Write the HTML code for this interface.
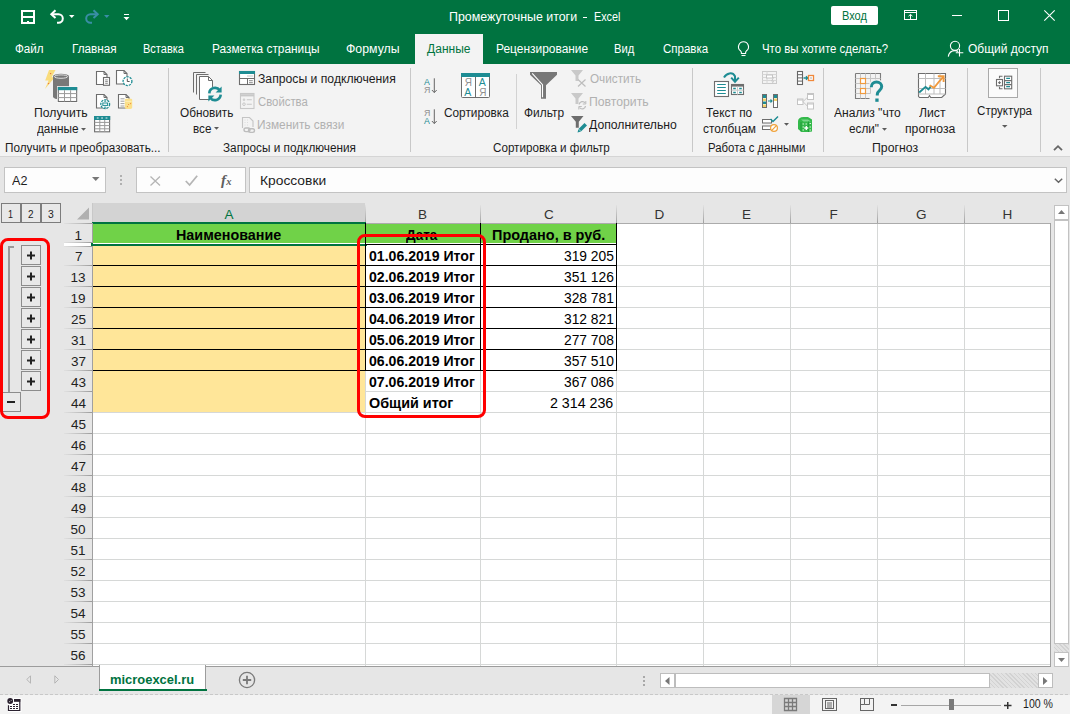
<!DOCTYPE html>
<html><head><meta charset="utf-8">
<style>
*{margin:0;padding:0;box-sizing:border-box}
html,body{width:1070px;height:714px;overflow:hidden;background:#f3f3f3;font-family:"Liberation Sans",sans-serif;position:relative}
.a{position:absolute}
.t{position:absolute;white-space:nowrap;line-height:1}
svg.a{overflow:visible}
</style></head><body>

<div class="a" style="left:0px;top:0px;width:1070px;height:64px;background:#007340"></div>
<svg class="a" style="left:21px;top:10px;" width="14" height="14" viewBox="0 0 14 14"><path d="M1 1h12v12H1z" fill="none" stroke="#fff" stroke-width="2"/><path d="M1 7h12" stroke="#fff" stroke-width="2"/><path d="M6 11h2v2h-2z" fill="#fff"/></svg>
<svg class="a" style="left:49px;top:9px;" width="16" height="15" viewBox="0 0 16 15"><path d="M3 5.2h6.5a4.3 4.3 0 0 1 0 8.6H8" fill="none" stroke="#fff" stroke-width="2"/><path d="M6.5 1.3L2.3 5.2 6.5 9.1" fill="none" stroke="#fff" stroke-width="2"/></svg>
<svg class="a" style="left:69px;top:15px;" width="6" height="3" viewBox="0 0 6 3"><path d="M0 0h5.5l-2.75 3z" fill="#fff"/></svg>
<svg class="a" style="left:84px;top:9px;" width="16" height="15" viewBox="0 0 16 15"><path d="M12 5.2H6.5a4.3 4.3 0 0 0 0 8.6H8" fill="none" stroke="#3a8ea6" stroke-width="2"/><path d="M9.5 1.3l4.2 3.9-4.2 3.9" fill="none" stroke="#3a8ea6" stroke-width="2"/></svg>
<svg class="a" style="left:104px;top:15px;" width="6" height="3" viewBox="0 0 6 3"><path d="M0 0h5.5l-2.75 3z" fill="#3a8ea6"/></svg>
<div class="a" style="left:124px;top:14px;width:5px;height:1px;background:#fff"></div>
<svg class="a" style="left:123px;top:17px;" width="7" height="4" viewBox="0 0 7 4"><path d="M0.5 0h6l-3 3.2z" fill="#fff"/></svg>
<div class="t" style="left:448.77px;top:11px;font-family:'Liberation Sans';font-size:12px;color:#fff;font-weight:normal;font-style:normal;transform:scaleX(1.0325);transform-origin:0 0;">Промежуточные итоги</div>
<div class="a" style="left:583px;top:17px;width:4px;height:1px;background:#fff"></div>
<div class="t" style="left:593.60px;top:11px;font-family:'Liberation Sans';font-size:12px;color:#fff;font-weight:normal;font-style:normal;transform:scaleX(0.9000);transform-origin:0 0;">Excel</div>
<div class="a" style="left:831px;top:6px;width:47px;height:19px;background:#fff;border-radius:2px"></div>
<div class="t" style="left:841.88px;top:10px;font-family:'Liberation Sans';font-size:12px;color:#007340;font-weight:normal;font-style:normal;transform:scaleX(0.9192);transform-origin:0 0;">Вход</div>
<svg class="a" style="left:904px;top:10px;" width="13" height="10" viewBox="0 0 13 10"><rect x="0.5" y="0.5" width="12" height="9" fill="none" stroke="#fff"/><path d="M0.5 2.5h12M6.5 9.5V4.5M4.5 6.2l2-1.8 2 1.8" fill="none" stroke="#fff"/></svg>
<div class="a" style="left:952px;top:15px;width:10px;height:1px;background:#fff"></div>
<svg class="a" style="left:998px;top:10px;" width="11" height="11" viewBox="0 0 11 11"><rect x="0.5" y="0.5" width="10" height="10" fill="none" stroke="#fff"/></svg>
<svg class="a" style="left:1044px;top:10px;" width="11" height="11" viewBox="0 0 11 11"><path d="M0.3 0.3l10.4 10.4M10.7 0.3L0.3 10.7" stroke="#fff" stroke-width="1.1"/></svg>
<div class="a" style="left:415px;top:34px;width:68px;height:30px;background:#f3f3f3"></div>
<div class="t" style="left:14.60px;top:43px;font-family:'Liberation Sans';font-size:12px;color:#fff;font-weight:normal;font-style:normal;transform:scaleX(0.9690);transform-origin:0 0;">Файл</div>
<div class="t" style="left:71.72px;top:43px;font-family:'Liberation Sans';font-size:12px;color:#fff;font-weight:normal;font-style:normal;transform:scaleX(0.9773);transform-origin:0 0;">Главная</div>
<div class="t" style="left:143.08px;top:43px;font-family:'Liberation Sans';font-size:12px;color:#fff;font-weight:normal;font-style:normal;transform:scaleX(0.9182);transform-origin:0 0;">Вставка</div>
<div class="t" style="left:211.71px;top:43px;font-family:'Liberation Sans';font-size:12px;color:#fff;font-weight:normal;font-style:normal;transform:scaleX(0.9869);transform-origin:0 0;">Разметка страницы</div>
<div class="t" style="left:346.30px;top:43px;font-family:'Liberation Sans';font-size:12px;color:#fff;font-weight:normal;font-style:normal;transform:scaleX(1.0250);transform-origin:0 0;">Формулы</div>
<div class="t" style="left:427.10px;top:43px;font-family:'Liberation Sans';font-size:12px;color:#007340;font-weight:normal;font-style:normal;transform:scaleX(1.0000);transform-origin:0 0;">Данные</div>
<div class="t" style="left:495.51px;top:43px;font-family:'Liberation Sans';font-size:12px;color:#fff;font-weight:normal;font-style:normal;transform:scaleX(0.9946);transform-origin:0 0;">Рецензирование</div>
<div class="t" style="left:614.47px;top:43px;font-family:'Liberation Sans';font-size:12px;color:#fff;font-weight:normal;font-style:normal;transform:scaleX(0.9333);transform-origin:0 0;">Вид</div>
<div class="t" style="left:662.50px;top:43px;font-family:'Liberation Sans';font-size:12px;color:#fff;font-weight:normal;font-style:normal;transform:scaleX(0.9596);transform-origin:0 0;">Справка</div>
<div class="t" style="left:762.45px;top:43px;font-family:'Liberation Sans';font-size:12px;color:#fff;font-weight:normal;font-style:normal;transform:scaleX(0.9515);transform-origin:0 0;">Что вы хотите сделать?</div>
<div class="t" style="left:967.50px;top:43px;font-family:'Liberation Sans';font-size:12px;color:#fff;font-weight:normal;font-style:normal;transform:scaleX(0.9988);transform-origin:0 0;">Общий доступ</div>
<svg class="a" style="left:737px;top:41px;" width="13" height="16" viewBox="0 0 13 16"><path d="M6.5 0.8a5 5 0 0 0-3 9c.6.5.9 1.1.9 1.9v.8h4.2v-.8c0-.8.3-1.4.9-1.9a5 5 0 0 0-3-9z" fill="none" stroke="#fff" stroke-width="1.1"/><path d="M4.5 14.5h4" stroke="#fff" stroke-width="1.1"/></svg>
<svg class="a" style="left:947px;top:40px;" width="18" height="18" viewBox="0 0 18 18"><circle cx="8" cy="5.8" r="4.6" fill="none" stroke="#fff" stroke-width="1.1"/><path d="M1.3 16.6c.6-3.6 3.3-6 6.7-6 1.2 0 2.3.3 3.2.8" fill="none" stroke="#fff" stroke-width="1.1"/><path d="M12.5 9v7.5M8.8 12.8h7.5" stroke="#fff" stroke-width="1.1"/></svg>
<div class="a" style="left:0px;top:64px;width:1070px;height:92px;background:#f3f3f3"></div>
<div class="a" style="left:0px;top:156px;width:1070px;height:1px;background:#d5d5d5"></div>
<div class="a" style="left:168px;top:68px;width:1px;height:84px;background:#c8c8c8"></div>
<div class="a" style="left:410px;top:68px;width:1px;height:84px;background:#c8c8c8"></div>
<div class="a" style="left:692px;top:68px;width:1px;height:84px;background:#c8c8c8"></div>
<div class="a" style="left:823px;top:68px;width:1px;height:84px;background:#c8c8c8"></div>
<div class="a" style="left:967px;top:68px;width:1px;height:84px;background:#c8c8c8"></div>
<div class="a" style="left:1040px;top:68px;width:1px;height:84px;background:#c8c8c8"></div>
<div class="a" style="left:516px;top:74px;width:1px;height:55px;background:#d2d2d2"></div>
<div class="t" style="left:5.42px;top:142px;font-family:'Liberation Sans';font-size:12px;color:#1c1c1c;font-weight:normal;font-style:normal;transform:scaleX(0.9771);transform-origin:0 0;">Получить и преобразовать...</div>
<div class="t" style="left:223.10px;top:142px;font-family:'Liberation Sans';font-size:12px;color:#1c1c1c;font-weight:normal;font-style:normal;transform:scaleX(0.9807);transform-origin:0 0;">Запросы и подключения</div>
<div class="t" style="left:492.70px;top:142px;font-family:'Liberation Sans';font-size:12px;color:#1c1c1c;font-weight:normal;font-style:normal;transform:scaleX(0.9700);transform-origin:0 0;">Сортировка и фильтр</div>
<div class="t" style="left:708.45px;top:142px;font-family:'Liberation Sans';font-size:12px;color:#1c1c1c;font-weight:normal;font-style:normal;transform:scaleX(0.9485);transform-origin:0 0;">Работа с данными</div>
<div class="t" style="left:871.58px;top:142px;font-family:'Liberation Sans';font-size:12px;color:#1c1c1c;font-weight:normal;font-style:normal;transform:scaleX(1.0227);transform-origin:0 0;">Прогноз</div>
<svg class="a" style="left:44px;top:69px;" width="36" height="34" viewBox="0 0 36 34">
<path d="M5 1h6.5L7.6 8.2h3.2L1 20l3.6-8.6H1.2z" fill="#f9dc7c"/>
<circle cx="6.6" cy="4.6" r="0.7" fill="#e8663c"/><circle cx="4.6" cy="14.6" r="0.7" fill="#e8663c"/>
<path d="M9 7.3a8 2.6 0 0 1 16 0v20.5a8 2.6 0 0 1-16 0z" fill="#787878"/>
<ellipse cx="17" cy="7.6" rx="6.6" ry="1.7" fill="none" stroke="#e8e8e8" stroke-width="0.9"/>
<rect x="13" y="17.2" width="21" height="16.6" fill="#fff"/>
<rect x="14.3" y="18.5" width="18.4" height="14" fill="#fff" stroke="#6d6d6d" stroke-width="1.1"/>
<rect x="13.8" y="18" width="19.4" height="3.2" fill="#1e8c93"/>
<path d="M14.3 24.6h18.4M14.3 28.6h18.4M20.5 21.2v11.3M26.6 21.2v11.3" stroke="#9a9a9a" stroke-width="1"/></svg>
<div class="t" style="left:33.88px;top:107px;font-family:'Liberation Sans';font-size:12px;color:#1c1c1c;font-weight:normal;font-style:normal;transform:scaleX(1.0173);transform-origin:0 0;">Получить</div>
<div class="t" style="left:37.20px;top:123px;font-family:'Liberation Sans';font-size:12px;color:#1c1c1c;font-weight:normal;font-style:normal;transform:scaleX(0.9810);transform-origin:0 0;">данные</div>
<svg class="a" style="left:81px;top:128px;" width="6" height="3" viewBox="0 0 6 3"><path d="M0 0h5l-2.5 2.8z" fill="#5a5a5a"/></svg>
<svg class="a" style="left:90px;top:66px;" width="50" height="70" viewBox="0 0 50 70">
<path d="M6.5 5.5H14l3 3v10H6.5z" fill="#fff" stroke="#6d6d6d" stroke-width="1.1"/><path d="M14 5.5v3h3" fill="none" stroke="#6d6d6d"/>
<rect x="13.5" y="11.5" width="6" height="7.8" fill="#fff" stroke="#6d6d6d" stroke-width="1.1"/><path d="M15.2 13.9h2.6M15.2 15.6h2.6M15.2 17.3h2.6" stroke="#8a8a8a"/>
<path d="M26.5 4.5H34l3 3v10.5H26.5z" fill="#fff" stroke="#6d6d6d" stroke-width="1.1"/><path d="M34 4.5v3h3" fill="none" stroke="#6d6d6d"/>
<circle cx="37.5" cy="15.2" r="4.4" fill="#fff" stroke="#1e8c93" stroke-width="1.3" stroke-dasharray="2.2 1"/><path d="M37.3 12.5v3h2.3" fill="none" stroke="#555" stroke-width="1"/>
<path d="M6.5 28.5H14l3 3v10.5H6.5z" fill="#fff" stroke="#6d6d6d" stroke-width="1.1"/><path d="M14 28.5v3h3" fill="none" stroke="#6d6d6d"/>
<circle cx="15.2" cy="38.2" r="4.4" fill="#fff" stroke="#1e8c93" stroke-width="1.3" stroke-dasharray="2.2 1"/><rect x="12.8" y="37" width="4.8" height="2.4" fill="#fff" stroke="#1e8c93" stroke-width="1"/><path d="M14.2 35.2h2M14.2 41.2h2" stroke="#1e8c93"/>
<path d="M28.5 28.5H36l3 3v10.5H28.5z" fill="#fff" stroke="#6d6d6d" stroke-width="1.1"/><path d="M36 28.5v3h3" fill="none" stroke="#6d6d6d"/>
<path d="M30.5 32.8h4M30.5 35.2h4M30.5 37.6h4M30.5 40h4" stroke="#a0a0a0"/>
<path d="M34.8 33.8a3.7 1.2 0 0 1 7.4 0v8a3.7 1.2 0 0 1-7.4 0z" fill="#fbe08a"/><path d="M35.3 35.3h6.4" stroke="#fff3c4" stroke-width="0.8"/>
<circle cx="38.6" cy="38.5" r="0.6" fill="#f0883a"/><circle cx="40.6" cy="37.6" r="0.6" fill="#f0883a"/><circle cx="37.4" cy="40.6" r="0.6" fill="#f0883a"/>
<rect x="4.6" y="50.6" width="15" height="15.2" fill="#fff" stroke="#6d6d6d" stroke-width="1.1"/><rect x="4" y="50" width="16.2" height="4" fill="#1e8c93"/>
<path d="M6.8 52h1.8M11.2 52h1.8M15.6 52h1.8" stroke="#fff" stroke-width="0.9"/>
<path d="M4.6 56.4h15M4.6 59.6h15M4.6 62.8h15M9.8 54v11.8M14.7 54v11.8" stroke="#9a9a9a"/></svg>
<svg class="a" style="left:192px;top:71px;" width="32" height="32" viewBox="0 0 32 32">
<path d="M1.5 1.5h12M1.5 1.5v20" fill="none" stroke="#6d6d6d"/>
<path d="M4.5 3.5h12M4.5 3.5v20" fill="none" stroke="#6d6d6d"/>
<path d="M7.5 5.5h9l4 4v19h-13z" fill="#fff" stroke="#6d6d6d"/>
<path d="M16.5 5.5v4h4" fill="none" stroke="#6d6d6d"/>
<circle cx="23" cy="23" r="7.5" fill="#f3f3f3"/>
<path d="M17.3 22.3a5.8 5.8 0 0 1 10.5-3" fill="none" stroke="#1e8c93" stroke-width="2.6"/>
<path d="M29.6 15.5v6h-6z" fill="#1e8c93"/>
<path d="M28.7 23.7a5.8 5.8 0 0 1-10.5 3" fill="none" stroke="#1e8c93" stroke-width="2.6"/>
<path d="M16.4 30.5v-6h6z" fill="#1e8c93"/></svg>
<div class="t" style="left:179.60px;top:107px;font-family:'Liberation Sans';font-size:12px;color:#1c1c1c;font-weight:normal;font-style:normal;transform:scaleX(0.9833);transform-origin:0 0;">Обновить</div>
<div class="t" style="left:192.53px;top:123px;font-family:'Liberation Sans';font-size:12px;color:#1c1c1c;font-weight:normal;font-style:normal;transform:scaleX(0.9722);transform-origin:0 0;">все</div>
<svg class="a" style="left:214px;top:127px;" width="6" height="3" viewBox="0 0 6 3"><path d="M0 0h5l-2.5 2.8z" fill="#5a5a5a"/></svg>
<svg class="a" style="left:239px;top:71px;" width="16" height="14" viewBox="0 0 16 14"><rect x="0.5" y="0.5" width="15" height="13" fill="#fff" stroke="#6d6d6d" stroke-width="1.1"/><rect x="0" y="0" width="16" height="3" fill="#1e8c93"/><path d="M8.5 5h1M10.5 5h1M12.5 5h1" stroke="#888"/><path d="M0.5 7.5h15M8.5 7.5v6" stroke="#6d6d6d"/><path d="M10 9.7h3.8M10 11.7h3.8" stroke="#8a8a8a"/></svg>
<div class="t" style="left:258.00px;top:73px;font-family:'Liberation Sans';font-size:12px;color:#1c1c1c;font-weight:normal;font-style:normal;transform:scaleX(1.0163);transform-origin:0 0;">Запросы и подключения</div>
<svg class="a" style="left:240px;top:93px;" width="15" height="16" viewBox="0 0 15 16"><rect x="0.5" y="0.5" width="13.5" height="15" fill="none" stroke="#c8c8c8" stroke-width="1.1"/><path d="M0.5 2.3h13.5" stroke="#c8c8c8" stroke-width="2.2"/><circle cx="4" cy="6.8" r="1.3" fill="#d0d0d0"/><circle cx="4" cy="11.2" r="1.3" fill="none" stroke="#c8c8c8"/><path d="M6.8 6.8h5M6.8 11.2h5" stroke="#c8c8c8" stroke-width="1.1"/></svg>
<div class="t" style="left:258.40px;top:96px;font-family:'Liberation Sans';font-size:12px;color:#b1b1b1;font-weight:normal;font-style:normal;transform:scaleX(0.9453);transform-origin:0 0;">Свойства</div>
<svg class="a" style="left:242px;top:117px;" width="14" height="16" viewBox="0 0 14 16"><path d="M0.5 11V0.5h7l3.5 3.5v6" fill="none" stroke="#c4c4c4" stroke-width="1.1"/><path d="M2.5 3h1M5 3h1M2.5 5.5h1M5 5.5h1M2.5 8h1M5 8h1" stroke="#dcdcdc"/><rect x="2" y="11" width="6" height="3.6" rx="1.8" fill="none" stroke="#bdbdbd" stroke-width="1.4"/><rect x="6.5" y="11.8" width="6" height="3.6" rx="1.8" fill="none" stroke="#bdbdbd" stroke-width="1.4"/></svg>
<div class="t" style="left:257.41px;top:119px;font-family:'Liberation Sans';font-size:12px;color:#b1b1b1;font-weight:normal;font-style:normal;transform:scaleX(0.9885);transform-origin:0 0;">Изменить связи</div>
<svg class="a" style="left:423px;top:78px;" width="15" height="16" viewBox="0 0 15 16"><text x="1" y="6.8" font-size="8.8" fill="#1e8c93" font-family="Liberation Sans">A</text>
<text x="1" y="14.8" font-size="8.8" fill="#8f8f8f" font-family="Liberation Sans">Я</text>
<path d="M11.3 0.3v14.2M8.9 12l2.4 2.6 2.4-2.6" fill="none" stroke="#666" stroke-width="1"/></svg>
<svg class="a" style="left:423px;top:109px;" width="15" height="16" viewBox="0 0 15 16"><text x="1" y="6.8" font-size="8.8" fill="#8f8f8f" font-family="Liberation Sans">Я</text>
<text x="1" y="14.8" font-size="8.8" fill="#1e8c93" font-family="Liberation Sans">A</text>
<path d="M11.3 0.3v14.2M8.9 12l2.4 2.6 2.4-2.6" fill="none" stroke="#666" stroke-width="1"/></svg>
<svg class="a" style="left:461px;top:73px;" width="30" height="25" viewBox="0 0 30 25"><rect x="0.5" y="0.5" width="28" height="24" rx="1" fill="#fff" stroke="#6d6d6d"/><rect x="0" y="0" width="29" height="4" fill="#1e8c93"/><path d="M14.5 4v20.5" stroke="#6d6d6d"/>
<text x="3.8" y="13.3" font-size="10" fill="#8f8f8f" font-family="Liberation Sans">Я</text><text x="3.3" y="23" font-size="10.5" fill="#1e8c93" font-family="Liberation Sans">A</text>
<text x="17.8" y="13.3" font-size="10.5" fill="#1e8c93" font-family="Liberation Sans">A</text><text x="18.3" y="23" font-size="10" fill="#8f8f8f" font-family="Liberation Sans">Я</text></svg>
<div class="t" style="left:443.50px;top:107px;font-family:'Liberation Sans';font-size:12px;color:#1c1c1c;font-weight:normal;font-style:normal;transform:scaleX(0.9833);transform-origin:0 0;">Сортировка</div>
<svg class="a" style="left:530px;top:72px;" width="27" height="27" viewBox="0 0 27 27"><path d="M0 0h27v2.8L16 13.2v13.6h-5V13.2L0 2.8z" fill="#777"/><path d="M2.2 1.4l10.3 11.3v12.6" fill="none" stroke="#fff" stroke-width="1.1"/></svg>
<div class="t" style="left:523.50px;top:107px;font-family:'Liberation Sans';font-size:12px;color:#1c1c1c;font-weight:normal;font-style:normal;transform:scaleX(0.9925);transform-origin:0 0;">Фильтр</div>
<svg class="a" style="left:571px;top:70px;" width="16" height="17" viewBox="0 0 16 17"><path d="M0 0h12l-4.5 5.5v5.5h-3v-5.5z" fill="#c9c9c9"/><path d="M7 9.5l7.5 7M14.5 9.5l-7.5 7" stroke="#bdbdbd" stroke-width="1.2"/></svg>
<div class="t" style="left:590.00px;top:73px;font-family:'Liberation Sans';font-size:12px;color:#b1b1b1;font-weight:normal;font-style:normal;transform:scaleX(0.9769);transform-origin:0 0;">Очистить</div>
<svg class="a" style="left:571px;top:93px;" width="16" height="17" viewBox="0 0 16 17"><path d="M0 0h12l-4.5 5.5v5.5h-3v-5.5z" fill="#c9c9c9"/><path d="M8.2 11.5a3.3 3.3 0 0 1 6-1.5M14.5 13a3.3 3.3 0 0 1-6 1.5" fill="none" stroke="#bdbdbd" stroke-width="1.3"/><path d="M14.8 8v3h-3M7.8 16.5v-3h3" fill="none" stroke="#bdbdbd"/></svg>
<div class="t" style="left:588.98px;top:96px;font-family:'Liberation Sans';font-size:12px;color:#b1b1b1;font-weight:normal;font-style:normal;transform:scaleX(1.0175);transform-origin:0 0;">Повторить</div>
<svg class="a" style="left:571px;top:116px;" width="17" height="17" viewBox="0 0 17 17"><path d="M0 0h12.5l-4.7 5.7v6h-3v-6z" fill="#6d6d6d"/><path d="M6.5 16.5l1-3.5 6-6 2.5 2.5-6 6z" fill="#1e8c93"/><path d="M7.5 13l2.5 2.5" stroke="#fff" stroke-width="0.6"/></svg>
<div class="t" style="left:589.20px;top:119px;font-family:'Liberation Sans';font-size:12px;color:#1c1c1c;font-weight:normal;font-style:normal;transform:scaleX(1.0163);transform-origin:0 0;">Дополнительно</div>
<svg class="a" style="left:713px;top:71px;" width="33" height="27" viewBox="0 0 33 27"><path d="M11 6.5C13.5 2 19.5 0.5 22 5.2v4.8" fill="none" stroke="#1e8c93" stroke-width="2"/><path d="M18.2 6.6L22 10.8l3.8-4.2" fill="none" stroke="#1e8c93" stroke-width="2"/>
<rect x="1.5" y="10.5" width="14" height="15" fill="#fff" stroke="#6d6d6d" stroke-width="1.1"/><path d="M4.2 13.5h8.6M4.2 16.5h8.6M4.2 19.5h8.6M4.2 22.5h8.6" stroke="#1e8c93" stroke-width="1.2"/>
<rect x="18.5" y="13.5" width="12" height="10" fill="#fff" stroke="#6d6d6d" stroke-width="1.1"/><rect x="18" y="13" width="13" height="2.6" fill="#6d6d6d"/><path d="M24.5 15.6v8M18.5 19.2h12" stroke="#c8c8c8"/><path d="M20.2 17.5h2.6M26.2 17.5h2.6M20.2 21.5h2.6M26.2 21.5h2.6" stroke="#1e8c93" stroke-width="1.3"/></svg>
<div class="t" style="left:706.20px;top:107px;font-family:'Liberation Sans';font-size:12px;color:#1c1c1c;font-weight:normal;font-style:normal;transform:scaleX(0.9894);transform-origin:0 0;">Текст по</div>
<div class="t" style="left:702.90px;top:123px;font-family:'Liberation Sans';font-size:12px;color:#1c1c1c;font-weight:normal;font-style:normal;transform:scaleX(0.9906);transform-origin:0 0;">столбцам</div>
<svg class="a" style="left:762px;top:71px;" width="16" height="14" viewBox="0 0 16 14"><rect x="0.5" y="0.5" width="14" height="12" fill="none" stroke="#cacaca"/><path d="M0.5 3.5h14M0.5 6.5h14M0.5 9.5h14M5 0.5v12" stroke="#d6d6d6"/><rect x="4.5" y="4" width="6" height="3" fill="#fff" stroke="#c4c4c4"/><path d="M12 6l-2.5 4h2l-1.5 3" fill="none" stroke="#c8c8c8"/></svg>
<svg class="a" style="left:762px;top:94px;" width="16" height="14" viewBox="0 0 16 14"><rect x="0.5" y="0.5" width="4" height="13" fill="#fff" stroke="#6d6d6d"/><rect x="11.5" y="0.5" width="4" height="13" fill="#fff" stroke="#6d6d6d"/><rect x="1" y="1" width="3" height="3" fill="#1e8c93"/><rect x="1" y="4.5" width="3" height="2.5" fill="#f3d26a"/><rect x="1" y="7.5" width="3" height="2.5" fill="#1e8c93"/><rect x="1" y="10.5" width="3" height="2.5" fill="#f3d26a"/><rect x="12" y="1" width="3" height="3" fill="#1e8c93"/><rect x="12" y="4.5" width="3" height="2.5" fill="#f3d26a"/><path d="M6 7h4M8.5 5.5L10 7 8.5 8.5" fill="none" stroke="#1e8c93" stroke-width="1.1"/></svg>
<svg class="a" style="left:762px;top:116px;" width="17" height="16" viewBox="0 0 17 16"><rect x="0.5" y="3.5" width="9" height="3.5" fill="#fff" stroke="#6d6d6d"/><rect x="0.5" y="10" width="9" height="3.5" fill="#fff" stroke="#6d6d6d"/><path d="M8.5 3l2.5 2.5L16 0.5" fill="none" stroke="#1e8c93" stroke-width="1.5"/><circle cx="12" cy="12" r="3.4" fill="#fff" stroke="#f0a23a" stroke-width="1.2"/><path d="M9.8 14.3l4.6-4.6" stroke="#f0a23a" stroke-width="1.2"/></svg>
<svg class="a" style="left:784px;top:123px;" width="6" height="3" viewBox="0 0 6 3"><path d="M0 0h5l-2.5 2.8z" fill="#5a5a5a"/></svg>
<svg class="a" style="left:797px;top:71px;" width="17" height="14" viewBox="0 0 17 14"><rect x="0.5" y="0.5" width="5" height="13" fill="#fff" stroke="#666" stroke-width="1.1"/><path d="M0.5 3.7h5M0.5 6.9h5M0.5 10.1h5" stroke="#666"/><path d="M6.5 7h4M9 5.2L10.8 7 9 8.8" fill="none" stroke="#1e8c93" stroke-width="1.3"/><rect x="11.5" y="4.5" width="5" height="5" fill="#fff" stroke="#f0883a" stroke-width="1.3"/><rect x="13.3" y="6.3" width="1.4" height="1.4" fill="#aaa"/></svg>
<svg class="a" style="left:797px;top:93px;" width="17" height="17" viewBox="0 0 17 17"><rect x="0.5" y="6" width="5.5" height="5.5" fill="#fff" stroke="#c4c4c4"/><rect x="10.5" y="0.5" width="6" height="6" fill="#fff" stroke="#c4c4c4"/><rect x="10.5" y="10" width="6" height="6" fill="#fff" stroke="#c4c4c4"/><path d="M0.5 7h5.5M10.5 1.5h6M10.5 11h6" stroke="#c4c4c4" stroke-width="1.2"/><path d="M6 8.7l4.5-4.5M6 8.7l4.5 4.5" fill="none" stroke="#c8c8c8"/></svg>
<svg class="a" style="left:797px;top:116px;" width="16" height="17" viewBox="0 0 16 17"><path d="M1 5.5C1 2.5 3 1 6.5 1H11l4 2.5V15.5L11.5 16H4.5L1 13z" fill="#33b94a"/><path d="M4 3.5h7l3 2H6.5z" fill="#7ad68a"/><path d="M4 6v9.5M11.5 5.5V16" stroke="#1f9a38" stroke-width="0.9"/><path d="M5.5 8h1.5M8.5 8h1.5M12.5 7.5h1.5M5.5 11h1.5M12.5 11h1.5M5.5 14h1.5M12.5 14h1.5" stroke="#d9f5dc" stroke-width="1.2"/><path d="M9.3 10v4M7.3 12h4" stroke="#fff" stroke-width="1.3"/></svg>
<svg class="a" style="left:854px;top:72px;" width="32" height="32" viewBox="0 0 32 32"><path d="M1.5 1.5h25v10M1.5 1.5v25h14" fill="none" stroke="#7c7c7c" stroke-width="1.1"/>
<path d="M6.5 1.5v25M11.5 1.5v25M16.5 1.5v20M21.5 1.5v10M1.5 6.5h25M1.5 11.5h25M1.5 16.5h15M1.5 21.5h15" stroke="#c4c4c4" stroke-width="1"/>
<rect x="6.5" y="6.5" width="5" height="5" fill="#fff" stroke="#f09a3e" stroke-width="1.2"/><rect x="6.5" y="16.5" width="5" height="5" fill="#fff" stroke="#f09a3e" stroke-width="1.2"/>
<path d="M17.3 15.2c0-3.3 2.4-5.2 5.2-5.2 3 0 5.2 2 5.2 4.6 0 4-4.4 3.9-4.4 7.6v1.2" fill="none" stroke="#f3f3f3" stroke-width="5.5"/>
<path d="M17.3 15.2c0-3.3 2.4-5.2 5.2-5.2 3 0 5.2 2 5.2 4.6 0 4-4.4 3.9-4.4 7.6v1.2" fill="none" stroke="#1e8c93" stroke-width="3"/>
<rect x="21.3" y="26.5" width="3.3" height="3.3" fill="#1e8c93"/></svg>
<div class="t" style="left:833.90px;top:107px;font-family:'Liberation Sans';font-size:12px;color:#1c1c1c;font-weight:normal;font-style:normal;transform:scaleX(1.0061);transform-origin:0 0;">Анализ "что</div>
<div class="t" style="left:848.70px;top:123px;font-family:'Liberation Sans';font-size:12px;color:#1c1c1c;font-weight:normal;font-style:normal;transform:scaleX(0.9774);transform-origin:0 0;">если"</div>
<svg class="a" style="left:882px;top:128px;" width="6" height="3" viewBox="0 0 6 3"><path d="M0 0h5l-2.5 2.8z" fill="#5a5a5a"/></svg>
<svg class="a" style="left:917px;top:72px;" width="30" height="27" viewBox="0 0 30 27"><path d="M1.5 1.5h27v20.5l-3.8 3.5h-11l-1.2-2-1.2 2H2.5l-1-1.2z" fill="#fff" stroke="#6d6d6d" stroke-width="1.1"/>
<path d="M1.5 6.5h27M1.5 16.5h27M1.5 22h27M8.5 1.5v20.5M17 1.5v20.5M23 1.5v20.5" stroke="#bdbdbd" stroke-width="1"/>
<path d="M2.2 20.5l6.3-5.6 3 2.4 2.6-3.3" fill="none" stroke="#1e8c93" stroke-width="1.9"/>
<path d="M12.6 13.2l4.4 2.6 5.5-6.8 4-4.3" fill="none" stroke="#f09a3e" stroke-width="1.9"/><path d="M20.8 4.2h5.8v5.8" fill="none" stroke="#f09a3e" stroke-width="1.9"/></svg>
<div class="t" style="left:918.60px;top:107px;font-family:'Liberation Sans';font-size:12px;color:#1c1c1c;font-weight:normal;font-style:normal;transform:scaleX(1.0192);transform-origin:0 0;">Лист</div>
<div class="t" style="left:905.48px;top:123px;font-family:'Liberation Sans';font-size:12px;color:#1c1c1c;font-weight:normal;font-style:normal;transform:scaleX(1.0163);transform-origin:0 0;">прогноза</div>
<div class="a" style="left:988px;top:68px;width:30px;height:30px;background:#fbfbfb;border:1px solid #a9a9a9"></div>
<svg class="a" style="left:995px;top:75px;" width="18" height="15" viewBox="0 0 18 15"><path d="M7.5 1.2H4.5V3.2M4.5 11.8v2h3" fill="none" stroke="#6d6d6d" stroke-width="1.1"/><rect x="1.5" y="4.5" width="6" height="6.3" fill="#fff" stroke="#6d6d6d" stroke-width="1.1"/><path d="M3.2 7.6h2.6M4.5 6.3v2.6" stroke="#6d6d6d" stroke-width="1.1"/><rect x="9.5" y="1.2" width="7.2" height="12.6" fill="#fff" stroke="#6d6d6d" stroke-width="1.1"/><path d="M9.5 5.6h7.2M9.5 9.6h7.2" stroke="#6d6d6d" stroke-width="1.1"/><path d="M11.2 3.4h3.8M11.2 7.6h3.8M11.2 11.6h3.8" stroke="#1e8c93" stroke-width="1.2"/></svg>
<div class="t" style="left:976.50px;top:105px;font-family:'Liberation Sans';font-size:12px;color:#1c1c1c;font-weight:normal;font-style:normal;transform:scaleX(0.9667);transform-origin:0 0;">Структура</div>
<svg class="a" style="left:1002px;top:125px;" width="6" height="3" viewBox="0 0 6 3"><path d="M0 0h5.5l-2.75 2.8z" fill="#5a5a5a"/></svg>
<svg class="a" style="left:1053px;top:145px;" width="10" height="6" viewBox="0 0 10 6"><path d="M1 5.2l4-4 4 4" fill="none" stroke="#666" stroke-width="1.8"/></svg>
<div class="a" style="left:0px;top:157px;width:1070px;height:46px;background:#e6e6e6"></div>
<div class="a" style="left:4px;top:167px;width:102px;height:26px;background:#fdfdfd;border:1px solid #c3c3c3"></div>
<div class="t" style="left:11.50px;top:174px;font-family:'Liberation Sans';font-size:13px;color:#1e1e1e;font-weight:normal;font-style:normal;transform:scaleX(0.9688);transform-origin:0 0;">A2</div>
<svg class="a" style="left:92px;top:177px;" width="8" height="4" viewBox="0 0 8 4"><path d="M0 0h7.5l-3.75 4z" fill="#777"/></svg>
<div class="a" style="left:120px;top:175px;width:2px;height:2px;background:#b0b0b0"></div>
<div class="a" style="left:120px;top:179px;width:2px;height:2px;background:#b0b0b0"></div>
<div class="a" style="left:120px;top:183px;width:2px;height:2px;background:#b0b0b0"></div>
<div class="a" style="left:136px;top:167px;width:110px;height:26px;background:#fdfdfd;border:1px solid #c3c3c3"></div>
<svg class="a" style="left:150px;top:176px;" width="11" height="10" viewBox="0 0 11 10"><path d="M0.5 0.5l9.5 9M10 0.5L0.5 9.5" stroke="#b5b5b5" stroke-width="1.3"/></svg>
<svg class="a" style="left:185px;top:175px;" width="13" height="11" viewBox="0 0 13 11"><path d="M0.8 6l3.8 4L12.2 0.8" fill="none" stroke="#b5b5b5" stroke-width="1.8"/></svg>
<svg class="a" style="left:220px;top:172px;" width="16" height="16" viewBox="0 0 16 16"><text x="1" y="12.5" font-family="Liberation Serif" font-style="italic" font-weight="bold" font-size="15" fill="#5f5f5f">f</text><text x="6.3" y="12.8" font-family="Liberation Serif" font-style="italic" font-weight="bold" font-size="10.5" fill="#5f5f5f">x</text></svg>
<div class="a" style="left:249px;top:167px;width:818px;height:26px;background:#fdfdfd;border:1px solid #c3c3c3"></div>
<div class="t" style="left:260.44px;top:174px;font-family:'Liberation Sans';font-size:13px;color:#1e1e1e;font-weight:normal;font-style:normal;transform:scaleX(1.0623);transform-origin:0 0;">Кроссовки</div>
<svg class="a" style="left:1054px;top:178px;" width="9" height="5" viewBox="0 0 9 5"><path d="M0.8 0.8L4.5 4.2 8.2 0.8" fill="none" stroke="#666" stroke-width="1.5"/></svg>
<div class="a" style="left:0px;top:203px;width:1070px;height:464px;background:#e6e6e6"></div>
<div class="a" style="left:1px;top:203px;width:20px;height:20px;border:1px solid #7c7c7c;background:#e8e8e8"></div>
<div class="a" style="left:21px;top:203px;width:20px;height:20px;border:1px solid #7c7c7c;background:#e8e8e8"></div>
<div class="a" style="left:41px;top:203px;width:20px;height:20px;border:1px solid #7c7c7c;background:#e8e8e8"></div>
<div class="t" style="left:7.92px;top:209px;font-family:'Liberation Sans';font-size:11.5px;color:#222;font-weight:normal;font-style:normal;transform:scaleX(0.7800);transform-origin:0 0;">1</div>
<div class="t" style="left:27.80px;top:209px;font-family:'Liberation Sans';font-size:11.5px;color:#222;font-weight:normal;font-style:normal;transform:scaleX(0.8667);transform-origin:0 0;">2</div>
<div class="t" style="left:47.80px;top:209px;font-family:'Liberation Sans';font-size:11.5px;color:#222;font-weight:normal;font-style:normal;transform:scaleX(0.9000);transform-origin:0 0;">3</div>
<svg class="a" style="left:77px;top:207px;" width="12" height="13" viewBox="0 0 12 13"><path d="M12 0.5V12.5H0z" fill="#b0b0b0"/></svg>
<div class="a" style="left:64px;top:223px;width:28px;height:1px;background:linear-gradient(90deg,#e0e0e0,#bdbdbd 60%,#9a9a9a)"></div>
<div class="a" style="left:92px;top:203px;width:1px;height:20px;background:#c8c8c8"></div>
<div class="a" style="left:92px;top:223px;width:958px;height:443px;background:#fff"></div>
<div class="a" style="left:93px;top:203px;width:272px;height:19px;background:#d3d3d3"></div>
<div class="t" style="left:224.50px;top:208px;font-family:'Liberation Sans';font-size:13.5px;color:#007340;font-weight:normal;font-style:normal;transform:scaleX(1.0000);transform-origin:0 0;">A</div>
<div class="t" style="left:418.00px;top:208px;font-family:'Liberation Sans';font-size:13.5px;color:#333;font-weight:normal;font-style:normal;transform:scaleX(1.0000);transform-origin:0 0;">B</div>
<div class="a" style="left:365px;top:205px;width:1px;height:18px;background:linear-gradient(180deg,#e2e2e2,#c0c0c0 50%,#a0a0a0)"></div>
<div class="t" style="left:544.00px;top:208px;font-family:'Liberation Sans';font-size:13.5px;color:#333;font-weight:normal;font-style:normal;transform:scaleX(1.0000);transform-origin:0 0;">C</div>
<div class="a" style="left:480px;top:205px;width:1px;height:18px;background:linear-gradient(180deg,#e2e2e2,#c0c0c0 50%,#a0a0a0)"></div>
<div class="t" style="left:654.50px;top:208px;font-family:'Liberation Sans';font-size:13.5px;color:#333;font-weight:normal;font-style:normal;transform:scaleX(1.0000);transform-origin:0 0;">D</div>
<div class="a" style="left:616px;top:205px;width:1px;height:18px;background:linear-gradient(180deg,#e2e2e2,#c0c0c0 50%,#a0a0a0)"></div>
<div class="t" style="left:742.00px;top:208px;font-family:'Liberation Sans';font-size:13.5px;color:#333;font-weight:normal;font-style:normal;transform:scaleX(1.0000);transform-origin:0 0;">E</div>
<div class="a" style="left:703px;top:205px;width:1px;height:18px;background:linear-gradient(180deg,#e2e2e2,#c0c0c0 50%,#a0a0a0)"></div>
<div class="t" style="left:829.50px;top:208px;font-family:'Liberation Sans';font-size:13.5px;color:#333;font-weight:normal;font-style:normal;transform:scaleX(1.0000);transform-origin:0 0;">F</div>
<div class="a" style="left:790px;top:205px;width:1px;height:18px;background:linear-gradient(180deg,#e2e2e2,#c0c0c0 50%,#a0a0a0)"></div>
<div class="t" style="left:916.00px;top:208px;font-family:'Liberation Sans';font-size:13.5px;color:#333;font-weight:normal;font-style:normal;transform:scaleX(1.0000);transform-origin:0 0;">G</div>
<div class="a" style="left:877px;top:205px;width:1px;height:18px;background:linear-gradient(180deg,#e2e2e2,#c0c0c0 50%,#a0a0a0)"></div>
<div class="t" style="left:1002.50px;top:208px;font-family:'Liberation Sans';font-size:13.5px;color:#333;font-weight:normal;font-style:normal;transform:scaleX(1.0000);transform-origin:0 0;">H</div>
<div class="a" style="left:964px;top:205px;width:1px;height:18px;background:linear-gradient(180deg,#e2e2e2,#c0c0c0 50%,#a0a0a0)"></div>
<div class="a" style="left:92px;top:223px;width:958px;height:1px;background:#ababab"></div>
<div class="a" style="left:92px;top:222px;width:274px;height:2px;background:#007340"></div>
<div class="a" style="left:92px;top:265px;width:958px;height:1px;background:#d6d8d7"></div>
<div class="a" style="left:92px;top:286px;width:958px;height:1px;background:#d6d8d7"></div>
<div class="a" style="left:92px;top:307px;width:958px;height:1px;background:#d6d8d7"></div>
<div class="a" style="left:92px;top:328px;width:958px;height:1px;background:#d6d8d7"></div>
<div class="a" style="left:92px;top:349px;width:958px;height:1px;background:#d6d8d7"></div>
<div class="a" style="left:92px;top:370px;width:958px;height:1px;background:#d6d8d7"></div>
<div class="a" style="left:92px;top:391px;width:958px;height:1px;background:#d6d8d7"></div>
<div class="a" style="left:92px;top:412px;width:958px;height:1px;background:#d6d8d7"></div>
<div class="a" style="left:92px;top:433px;width:958px;height:1px;background:#d6d8d7"></div>
<div class="a" style="left:92px;top:454px;width:958px;height:1px;background:#d6d8d7"></div>
<div class="a" style="left:92px;top:475px;width:958px;height:1px;background:#d6d8d7"></div>
<div class="a" style="left:92px;top:496px;width:958px;height:1px;background:#d6d8d7"></div>
<div class="a" style="left:92px;top:517px;width:958px;height:1px;background:#d6d8d7"></div>
<div class="a" style="left:92px;top:538px;width:958px;height:1px;background:#d6d8d7"></div>
<div class="a" style="left:92px;top:559px;width:958px;height:1px;background:#d6d8d7"></div>
<div class="a" style="left:92px;top:580px;width:958px;height:1px;background:#d6d8d7"></div>
<div class="a" style="left:92px;top:601px;width:958px;height:1px;background:#d6d8d7"></div>
<div class="a" style="left:92px;top:622px;width:958px;height:1px;background:#d6d8d7"></div>
<div class="a" style="left:92px;top:643px;width:958px;height:1px;background:#d6d8d7"></div>
<div class="a" style="left:92px;top:664px;width:958px;height:1px;background:#d6d8d7"></div>
<div class="a" style="left:365px;top:224px;width:1px;height:442px;background:#d6d8d7"></div>
<div class="a" style="left:480px;top:224px;width:1px;height:442px;background:#d6d8d7"></div>
<div class="a" style="left:616px;top:224px;width:1px;height:442px;background:#d6d8d7"></div>
<div class="a" style="left:703px;top:224px;width:1px;height:442px;background:#d6d8d7"></div>
<div class="a" style="left:790px;top:224px;width:1px;height:442px;background:#d6d8d7"></div>
<div class="a" style="left:877px;top:224px;width:1px;height:442px;background:#d6d8d7"></div>
<div class="a" style="left:964px;top:224px;width:1px;height:442px;background:#d6d8d7"></div>
<div class="a" style="left:1050px;top:223px;width:1px;height:444px;background:#a0a0a0"></div>
<div class="a" style="left:0px;top:666px;width:100px;height:1px;background:#9c9c9c"></div>
<div class="a" style="left:205px;top:666px;width:846px;height:1px;background:#9c9c9c"></div>
<div class="a" style="left:92px;top:223px;width:1px;height:444px;background:#a0a0a0"></div>
<div class="t" style="left:74.50px;top:229px;font-family:'Liberation Sans';font-size:13.5px;color:#222;font-weight:normal;font-style:normal;transform:scaleX(1.0000);transform-origin:0 0;">1</div>
<div class="t" style="left:75.00px;top:250px;font-family:'Liberation Sans';font-size:13.5px;color:#222;font-weight:normal;font-style:normal;transform:scaleX(1.0000);transform-origin:0 0;">7</div>
<div class="a" style="left:64px;top:265px;width:28px;height:1px;background:linear-gradient(90deg,#e0e0e0,#bdbdbd 60%,#9a9a9a)"></div>
<div class="t" style="left:70.50px;top:271px;font-family:'Liberation Sans';font-size:13.5px;color:#222;font-weight:normal;font-style:normal;transform:scaleX(1.0000);transform-origin:0 0;">13</div>
<div class="a" style="left:64px;top:286px;width:28px;height:1px;background:linear-gradient(90deg,#e0e0e0,#bdbdbd 60%,#9a9a9a)"></div>
<div class="t" style="left:70.50px;top:292px;font-family:'Liberation Sans';font-size:13.5px;color:#222;font-weight:normal;font-style:normal;transform:scaleX(1.0000);transform-origin:0 0;">19</div>
<div class="a" style="left:64px;top:307px;width:28px;height:1px;background:linear-gradient(90deg,#e0e0e0,#bdbdbd 60%,#9a9a9a)"></div>
<div class="t" style="left:71.00px;top:313px;font-family:'Liberation Sans';font-size:13.5px;color:#222;font-weight:normal;font-style:normal;transform:scaleX(1.0000);transform-origin:0 0;">25</div>
<div class="a" style="left:64px;top:328px;width:28px;height:1px;background:linear-gradient(90deg,#e0e0e0,#bdbdbd 60%,#9a9a9a)"></div>
<div class="t" style="left:71.00px;top:334px;font-family:'Liberation Sans';font-size:13.5px;color:#222;font-weight:normal;font-style:normal;transform:scaleX(1.0000);transform-origin:0 0;">31</div>
<div class="a" style="left:64px;top:349px;width:28px;height:1px;background:linear-gradient(90deg,#e0e0e0,#bdbdbd 60%,#9a9a9a)"></div>
<div class="t" style="left:71.00px;top:355px;font-family:'Liberation Sans';font-size:13.5px;color:#222;font-weight:normal;font-style:normal;transform:scaleX(1.0000);transform-origin:0 0;">37</div>
<div class="a" style="left:64px;top:370px;width:28px;height:1px;background:linear-gradient(90deg,#e0e0e0,#bdbdbd 60%,#9a9a9a)"></div>
<div class="t" style="left:71.00px;top:376px;font-family:'Liberation Sans';font-size:13.5px;color:#222;font-weight:normal;font-style:normal;transform:scaleX(1.0000);transform-origin:0 0;">43</div>
<div class="a" style="left:64px;top:391px;width:28px;height:1px;background:linear-gradient(90deg,#e0e0e0,#bdbdbd 60%,#9a9a9a)"></div>
<div class="t" style="left:71.00px;top:397px;font-family:'Liberation Sans';font-size:13.5px;color:#222;font-weight:normal;font-style:normal;transform:scaleX(1.0000);transform-origin:0 0;">44</div>
<div class="a" style="left:64px;top:412px;width:28px;height:1px;background:linear-gradient(90deg,#e0e0e0,#bdbdbd 60%,#9a9a9a)"></div>
<div class="t" style="left:71.00px;top:418px;font-family:'Liberation Sans';font-size:13.5px;color:#222;font-weight:normal;font-style:normal;transform:scaleX(1.0000);transform-origin:0 0;">45</div>
<div class="a" style="left:64px;top:433px;width:28px;height:1px;background:linear-gradient(90deg,#e0e0e0,#bdbdbd 60%,#9a9a9a)"></div>
<div class="t" style="left:71.00px;top:439px;font-family:'Liberation Sans';font-size:13.5px;color:#222;font-weight:normal;font-style:normal;transform:scaleX(1.0000);transform-origin:0 0;">46</div>
<div class="a" style="left:64px;top:454px;width:28px;height:1px;background:linear-gradient(90deg,#e0e0e0,#bdbdbd 60%,#9a9a9a)"></div>
<div class="t" style="left:71.00px;top:460px;font-family:'Liberation Sans';font-size:13.5px;color:#222;font-weight:normal;font-style:normal;transform:scaleX(1.0000);transform-origin:0 0;">47</div>
<div class="a" style="left:64px;top:475px;width:28px;height:1px;background:linear-gradient(90deg,#e0e0e0,#bdbdbd 60%,#9a9a9a)"></div>
<div class="t" style="left:71.00px;top:481px;font-family:'Liberation Sans';font-size:13.5px;color:#222;font-weight:normal;font-style:normal;transform:scaleX(1.0000);transform-origin:0 0;">48</div>
<div class="a" style="left:64px;top:496px;width:28px;height:1px;background:linear-gradient(90deg,#e0e0e0,#bdbdbd 60%,#9a9a9a)"></div>
<div class="t" style="left:71.00px;top:502px;font-family:'Liberation Sans';font-size:13.5px;color:#222;font-weight:normal;font-style:normal;transform:scaleX(1.0000);transform-origin:0 0;">49</div>
<div class="a" style="left:64px;top:517px;width:28px;height:1px;background:linear-gradient(90deg,#e0e0e0,#bdbdbd 60%,#9a9a9a)"></div>
<div class="t" style="left:70.50px;top:523px;font-family:'Liberation Sans';font-size:13.5px;color:#222;font-weight:normal;font-style:normal;transform:scaleX(1.0000);transform-origin:0 0;">50</div>
<div class="a" style="left:64px;top:538px;width:28px;height:1px;background:linear-gradient(90deg,#e0e0e0,#bdbdbd 60%,#9a9a9a)"></div>
<div class="t" style="left:70.50px;top:544px;font-family:'Liberation Sans';font-size:13.5px;color:#222;font-weight:normal;font-style:normal;transform:scaleX(1.0000);transform-origin:0 0;">51</div>
<div class="a" style="left:64px;top:559px;width:28px;height:1px;background:linear-gradient(90deg,#e0e0e0,#bdbdbd 60%,#9a9a9a)"></div>
<div class="t" style="left:70.50px;top:565px;font-family:'Liberation Sans';font-size:13.5px;color:#222;font-weight:normal;font-style:normal;transform:scaleX(1.0000);transform-origin:0 0;">52</div>
<div class="a" style="left:64px;top:580px;width:28px;height:1px;background:linear-gradient(90deg,#e0e0e0,#bdbdbd 60%,#9a9a9a)"></div>
<div class="t" style="left:70.50px;top:586px;font-family:'Liberation Sans';font-size:13.5px;color:#222;font-weight:normal;font-style:normal;transform:scaleX(1.0000);transform-origin:0 0;">53</div>
<div class="a" style="left:64px;top:601px;width:28px;height:1px;background:linear-gradient(90deg,#e0e0e0,#bdbdbd 60%,#9a9a9a)"></div>
<div class="t" style="left:70.50px;top:607px;font-family:'Liberation Sans';font-size:13.5px;color:#222;font-weight:normal;font-style:normal;transform:scaleX(1.0000);transform-origin:0 0;">54</div>
<div class="a" style="left:64px;top:622px;width:28px;height:1px;background:linear-gradient(90deg,#e0e0e0,#bdbdbd 60%,#9a9a9a)"></div>
<div class="t" style="left:70.50px;top:628px;font-family:'Liberation Sans';font-size:13.5px;color:#222;font-weight:normal;font-style:normal;transform:scaleX(1.0000);transform-origin:0 0;">55</div>
<div class="a" style="left:64px;top:643px;width:28px;height:1px;background:linear-gradient(90deg,#e0e0e0,#bdbdbd 60%,#9a9a9a)"></div>
<div class="t" style="left:70.50px;top:649px;font-family:'Liberation Sans';font-size:13.5px;color:#222;font-weight:normal;font-style:normal;transform:scaleX(1.0000);transform-origin:0 0;">56</div>
<div class="a" style="left:64px;top:664px;width:28px;height:1px;background:linear-gradient(90deg,#e0e0e0,#bdbdbd 60%,#9a9a9a)"></div>
<div class="a" style="left:64px;top:242px;width:28px;height:1px;background:linear-gradient(90deg,#e0e0e0,#bdbdbd 60%,#9a9a9a)"></div>
<div class="a" style="left:64px;top:243px;width:28px;height:3px;background:#fff"></div>
<div class="a" style="left:64px;top:246px;width:28px;height:1px;background:linear-gradient(90deg,#e0e0e0,#bdbdbd 60%,#9a9a9a)"></div>
<div class="a" style="left:93px;top:224px;width:523px;height:19px;background:#70d248"></div>
<div class="a" style="left:93px;top:243px;width:273px;height:1px;background:#fff"></div>
<div class="a" style="left:91px;top:244px;width:276px;height:2px;background:#007340"></div>
<div class="a" style="left:91px;top:243px;width:2px;height:1px;background:#007340"></div>
<div class="a" style="left:93px;top:246px;width:272px;height:166px;background:#ffe699"></div>
<div class="a" style="left:365px;top:223px;width:1px;height:148px;background:#000"></div>
<div class="a" style="left:480px;top:223px;width:1px;height:148px;background:#000"></div>
<div class="a" style="left:616px;top:223px;width:1px;height:148px;background:#000"></div>
<div class="a" style="left:93px;top:265px;width:524px;height:1px;background:#000"></div>
<div class="a" style="left:93px;top:286px;width:524px;height:1px;background:#000"></div>
<div class="a" style="left:93px;top:307px;width:524px;height:1px;background:#000"></div>
<div class="a" style="left:93px;top:328px;width:524px;height:1px;background:#000"></div>
<div class="a" style="left:93px;top:349px;width:524px;height:1px;background:#000"></div>
<div class="a" style="left:93px;top:370px;width:524px;height:1px;background:#000"></div>
<div class="a" style="left:366px;top:244px;width:251px;height:1px;background:#000"></div>
<div class="t" style="left:175.98px;top:228px;font-family:'Liberation Sans';font-size:14px;color:#000;font-weight:bold;font-style:normal;transform:scaleX(1.0245);transform-origin:0 0;">Наименование</div>
<div class="t" style="left:406.30px;top:228px;font-family:'Liberation Sans';font-size:14px;color:#000;font-weight:bold;font-style:normal;transform:scaleX(0.9667);transform-origin:0 0;">Дата</div>
<div class="t" style="left:492.37px;top:228px;font-family:'Liberation Sans';font-size:14px;color:#000;font-weight:bold;font-style:normal;transform:scaleX(1.0324);transform-origin:0 0;">Продано, в руб.</div>
<div class="t" style="left:368.50px;top:249px;font-family:'Liberation Sans';font-size:14px;color:#000;font-weight:bold;font-style:normal;transform:scaleX(1.0067);transform-origin:0 0;">01.06.2019 Итог</div>
<div class="t" style="left:564.25px;top:249px;font-family:'Liberation Sans';font-size:14px;color:#000;font-weight:normal;font-style:normal;transform:scaleX(0.9850);transform-origin:0 0;">319 205</div>
<div class="t" style="left:368.50px;top:270px;font-family:'Liberation Sans';font-size:14px;color:#000;font-weight:bold;font-style:normal;transform:scaleX(1.0067);transform-origin:0 0;">02.06.2019 Итог</div>
<div class="t" style="left:564.25px;top:270px;font-family:'Liberation Sans';font-size:14px;color:#000;font-weight:normal;font-style:normal;transform:scaleX(0.9850);transform-origin:0 0;">351 126</div>
<div class="t" style="left:368.50px;top:291px;font-family:'Liberation Sans';font-size:14px;color:#000;font-weight:bold;font-style:normal;transform:scaleX(1.0067);transform-origin:0 0;">03.06.2019 Итог</div>
<div class="t" style="left:564.25px;top:291px;font-family:'Liberation Sans';font-size:14px;color:#000;font-weight:normal;font-style:normal;transform:scaleX(0.9850);transform-origin:0 0;">328 781</div>
<div class="t" style="left:368.50px;top:312px;font-family:'Liberation Sans';font-size:14px;color:#000;font-weight:bold;font-style:normal;transform:scaleX(1.0067);transform-origin:0 0;">04.06.2019 Итог</div>
<div class="t" style="left:564.25px;top:312px;font-family:'Liberation Sans';font-size:14px;color:#000;font-weight:normal;font-style:normal;transform:scaleX(0.9850);transform-origin:0 0;">312 821</div>
<div class="t" style="left:368.50px;top:333px;font-family:'Liberation Sans';font-size:14px;color:#000;font-weight:bold;font-style:normal;transform:scaleX(1.0067);transform-origin:0 0;">05.06.2019 Итог</div>
<div class="t" style="left:564.25px;top:333px;font-family:'Liberation Sans';font-size:14px;color:#000;font-weight:normal;font-style:normal;transform:scaleX(0.9850);transform-origin:0 0;">277 708</div>
<div class="t" style="left:368.50px;top:354px;font-family:'Liberation Sans';font-size:14px;color:#000;font-weight:bold;font-style:normal;transform:scaleX(1.0067);transform-origin:0 0;">06.06.2019 Итог</div>
<div class="t" style="left:564.25px;top:354px;font-family:'Liberation Sans';font-size:14px;color:#000;font-weight:normal;font-style:normal;transform:scaleX(0.9850);transform-origin:0 0;">357 510</div>
<div class="t" style="left:368.50px;top:375px;font-family:'Liberation Sans';font-size:14px;color:#000;font-weight:bold;font-style:normal;transform:scaleX(1.0067);transform-origin:0 0;">07.06.2019 Итог</div>
<div class="t" style="left:564.25px;top:375px;font-family:'Liberation Sans';font-size:14px;color:#000;font-weight:normal;font-style:normal;transform:scaleX(0.9850);transform-origin:0 0;">367 086</div>
<div class="t" style="left:368.60px;top:396px;font-family:'Liberation Sans';font-size:14px;color:#000;font-weight:bold;font-style:normal;transform:scaleX(1.0268);transform-origin:0 0;">Общий итог</div>
<div class="t" style="left:550.40px;top:396px;font-family:'Liberation Sans';font-size:14px;color:#000;font-weight:normal;font-style:normal;transform:scaleX(1.0161);transform-origin:0 0;">2 314 236</div>
<div class="a" style="left:8px;top:246px;width:2px;height:146px;background:#999"></div>
<div class="a" style="left:8px;top:246px;width:6px;height:2px;background:#999"></div>
<div class="a" style="left:21px;top:245px;width:20px;height:20px;border:1px solid #8c8c8c;background:#e8e8e8"></div>
<svg class="a" style="left:27px;top:251px;" width="9" height="9" viewBox="0 0 9 9"><path d="M0 4.5h8M4 0.5v8" stroke="#222" stroke-width="2"/></svg>
<div class="a" style="left:21px;top:266px;width:20px;height:20px;border:1px solid #8c8c8c;background:#e8e8e8"></div>
<svg class="a" style="left:27px;top:272px;" width="9" height="9" viewBox="0 0 9 9"><path d="M0 4.5h8M4 0.5v8" stroke="#222" stroke-width="2"/></svg>
<div class="a" style="left:21px;top:287px;width:20px;height:20px;border:1px solid #8c8c8c;background:#e8e8e8"></div>
<svg class="a" style="left:27px;top:293px;" width="9" height="9" viewBox="0 0 9 9"><path d="M0 4.5h8M4 0.5v8" stroke="#222" stroke-width="2"/></svg>
<div class="a" style="left:21px;top:308px;width:20px;height:20px;border:1px solid #8c8c8c;background:#e8e8e8"></div>
<svg class="a" style="left:27px;top:314px;" width="9" height="9" viewBox="0 0 9 9"><path d="M0 4.5h8M4 0.5v8" stroke="#222" stroke-width="2"/></svg>
<div class="a" style="left:21px;top:329px;width:20px;height:20px;border:1px solid #8c8c8c;background:#e8e8e8"></div>
<svg class="a" style="left:27px;top:335px;" width="9" height="9" viewBox="0 0 9 9"><path d="M0 4.5h8M4 0.5v8" stroke="#222" stroke-width="2"/></svg>
<div class="a" style="left:21px;top:350px;width:20px;height:20px;border:1px solid #8c8c8c;background:#e8e8e8"></div>
<svg class="a" style="left:27px;top:356px;" width="9" height="9" viewBox="0 0 9 9"><path d="M0 4.5h8M4 0.5v8" stroke="#222" stroke-width="2"/></svg>
<div class="a" style="left:21px;top:371px;width:20px;height:20px;border:1px solid #8c8c8c;background:#e8e8e8"></div>
<svg class="a" style="left:27px;top:377px;" width="9" height="9" viewBox="0 0 9 9"><path d="M0 4.5h8M4 0.5v8" stroke="#222" stroke-width="2"/></svg>
<div class="a" style="left:-1px;top:392px;width:22px;height:20px;border:1px solid #8c8c8c;background:#e8e8e8"></div>
<div class="a" style="left:7px;top:401px;width:8px;height:2px;background:#222"></div>
<div class="a" style="left:0px;top:238px;width:50px;height:181px;border:3px solid #ff0000;border-radius:8px"></div>
<div class="a" style="left:357px;top:234px;width:129px;height:184px;border:3px solid #ff0000;border-radius:8px"></div>
<div class="a" style="left:1054px;top:205px;width:15px;height:15px;background:#fff;border:1px solid #c2c2c2"></div>
<svg class="a" style="left:1058px;top:210px;" width="7" height="4" viewBox="0 0 7 4"><path d="M0 4L3.5 0 7 4z" fill="#777"/></svg>
<div class="a" style="left:1054px;top:220px;width:15px;height:424px;background:#fff;border:1px solid #c2c2c2"></div>
<div class="a" style="left:1054px;top:644px;width:15px;height:8px;background:repeating-linear-gradient(45deg,#d2d2d2 0 1px,#e2e2e2 1px 3px)"></div>
<div class="a" style="left:1054px;top:652px;width:15px;height:15px;background:#fff;border:1px solid #c2c2c2"></div>
<svg class="a" style="left:1058px;top:658px;" width="7" height="4" viewBox="0 0 7 4"><path d="M0 0L3.5 4 7 0z" fill="#777"/></svg>
<div class="a" style="left:0px;top:667px;width:1070px;height:27px;background:#e6e6e6"></div>
<svg class="a" style="left:26px;top:675px;" width="6" height="9" viewBox="0 0 6 9"><path d="M4.5 0.8L0.8 4.5 4.5 8.2z" fill="none" stroke="#b0b0b0" stroke-width="0.9"/></svg>
<svg class="a" style="left:54px;top:675px;" width="6" height="9" viewBox="0 0 6 9"><path d="M0.8 0.8L4.5 4.5 0.8 8.2z" fill="none" stroke="#b0b0b0" stroke-width="0.9"/></svg>
<div class="a" style="left:99px;top:665px;width:107px;height:25px;background:#fff;border-left:1px solid #9c9c9c;border-right:1px solid #9c9c9c"></div>
<div class="a" style="left:99px;top:689px;width:108px;height:2px;background:#007340"></div>
<div class="t" style="left:110.44px;top:673px;font-family:'Liberation Sans';font-size:13.5px;color:#007340;font-weight:bold;font-style:normal;transform:scaleX(0.9581);transform-origin:0 0;">microexcel.ru</div>
<svg class="a" style="left:238px;top:671px;" width="18" height="18" viewBox="0 0 18 18"><circle cx="9" cy="9" r="7.6" fill="none" stroke="#7a7a7a" stroke-width="1.3"/><path d="M9 4.8v8.4M4.8 9h8.4" stroke="#7a7a7a" stroke-width="1.8"/></svg>
<div class="a" style="left:643px;top:676px;width:2px;height:2px;background:#a8a8a8"></div>
<div class="a" style="left:643px;top:680px;width:2px;height:2px;background:#a8a8a8"></div>
<div class="a" style="left:643px;top:684px;width:2px;height:2px;background:#a8a8a8"></div>
<div class="a" style="left:660px;top:673px;width:15px;height:15px;background:#fff;border:1px solid #bdbdbd"></div>
<svg class="a" style="left:665px;top:677px;" width="5" height="8" viewBox="0 0 5 8"><path d="M4.5 0L0 4l4.5 4z" fill="#777"/></svg>
<div class="a" style="left:675px;top:673px;width:315px;height:15px;background:#fff;border:1px solid #bdbdbd"></div>
<div class="a" style="left:990px;top:673px;width:48px;height:15px;background:repeating-linear-gradient(45deg,#d2d2d2 0 1px,#e2e2e2 1px 3px)"></div>
<div class="a" style="left:1038px;top:673px;width:15px;height:15px;background:#fff;border:1px solid #bdbdbd"></div>
<svg class="a" style="left:1043px;top:677px;" width="5" height="8" viewBox="0 0 5 8"><path d="M0 0l4.5 4L0 8z" fill="#777"/></svg>
<div class="a" style="left:0;top:694px;width:1070px;height:1px;background:repeating-linear-gradient(90deg,#c8c8c8 0 3px,#e6e6e6 3px 5px)"></div>
<div class="a" style="left:0px;top:695px;width:1070px;height:19px;background:#f3f3f3"></div>
<svg class="a" style="left:7px;top:697px;" width="15" height="16" viewBox="0 0 15 16"><rect x="1" y="1" width="13.5" height="14" fill="#fff"/><circle cx="3.2" cy="4" r="2.9" fill="#2b2230"/><circle cx="2.6" cy="4.6" r="0.6" fill="#bbb"/><circle cx="4.2" cy="3.4" r="0.5" fill="#bbb"/><rect x="7" y="2" width="6.3" height="2.8" fill="#2b2230"/><path d="M12.8 2v11.5H1.5V8.2" fill="none" stroke="#2b2230" stroke-width="1.2"/><path d="M6 7.5h2M9 7.5h2M3 9.5h2M6 9.5h2M9 9.5h2M3 11.5h2M6 11.5h2M9 11.5h2" stroke="#2b2230" stroke-width="1"/></svg>
<div class="a" style="left:772px;top:695px;width:38px;height:19px;background:#d6d6d6"></div>
<svg class="a" style="left:784px;top:698px;" width="13" height="13" viewBox="0 0 13 13"><path d="M0.5 0.5h12v12h-12zM0.5 4.5h12M0.5 8.5h12M4.5 0.5v12M8.5 0.5v12" fill="none" stroke="#7a7a7a" stroke-width="1.3"/></svg>
<svg class="a" style="left:822px;top:698px;" width="15" height="13" viewBox="0 0 15 13"><rect x="0.5" y="0.5" width="14" height="12" fill="none" stroke="#666"/><rect x="3.5" y="2.5" width="8" height="8" fill="none" stroke="#666"/><path d="M5 5h5M5 7h5M5 9h5" stroke="#666"/></svg>
<svg class="a" style="left:860px;top:698px;" width="14" height="13" viewBox="0 0 14 13"><rect x="0.5" y="0.5" width="13" height="12" fill="none" stroke="#666"/><path d="M4.5 0.5v6h5v-6M0.5 6.5h4" fill="none" stroke="#666"/></svg>
<div class="a" style="left:891px;top:704px;width:6px;height:2px;background:#333"></div>
<div class="a" style="left:901px;top:705px;width:100px;height:1px;background:#a6a6a6"></div>
<div class="a" style="left:949px;top:699px;width:5px;height:11px;background:#7a7a7a"></div>
<svg class="a" style="left:1004px;top:702px;" width="8" height="7" viewBox="0 0 8 7"><path d="M0 3.5h7.5M3.75 0v7" stroke="#333" stroke-width="1.5"/></svg>
<div class="t" style="left:1022.62px;top:698px;font-family:'Liberation Sans';font-size:12px;color:#1c1c1c;font-weight:normal;font-style:normal;transform:scaleX(0.8818);transform-origin:0 0;">100 %</div>
</body></html>
